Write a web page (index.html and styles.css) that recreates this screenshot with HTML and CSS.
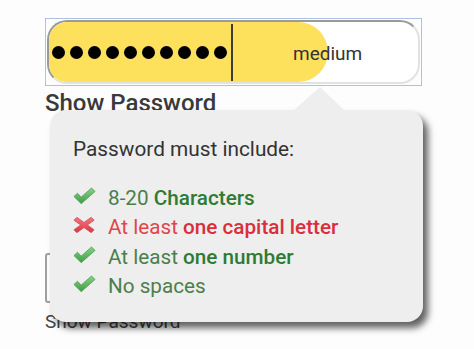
FILE: index.html
```html
<!DOCTYPE html>
<html>
<head>
<meta charset="utf-8">
<link rel="stylesheet" href="styles.css">
</head>
<body>
<div class="page">
  <div class="focus">
    <div class="field">
      <div class="meter"></div>
      <div class="content">
        <div class="dots">
          <span class="dot"></span><span class="dot"></span><span class="dot"></span><span class="dot"></span><span class="dot"></span>
          <span class="dot"></span><span class="dot"></span><span class="dot"></span><span class="dot"></span><span class="dot"></span>
        </div>
        <span class="cursor"></span>
        <span class="strength">medium</span>
      </div>
    </div>
  </div>
  <div class="label big">Show Password</div>
  <div class="field2"></div>
  <div class="label small">Show Password</div>

  <div class="popup">
    <div class="arrow"></div>
    <div class="title">Password must include:</div>
    <ul class="rules">
      <li class="ok">
        <svg class="icon" viewBox="0 0 24 18" width="23" height="18"><defs><linearGradient id="g1" x1="0" y1="0" x2="0" y2="1"><stop offset="0" stop-color="#86d486"/><stop offset="1" stop-color="#3f9c46"/></linearGradient></defs><path d="M1 9.6 L4.6 6.2 L8.6 10.1 L19.4 0.6 L23 4.2 L8.6 17 Z" fill="url(#g1)" stroke="#4c9c50" stroke-width="0.8" stroke-linejoin="round"/></svg>
        <span>8-20 <b>Characters</b></span>
      </li>
      <li class="bad">
        <svg class="icon" viewBox="0 0 24 18" width="23" height="18"><defs><linearGradient id="g2" x1="0" y1="0" x2="0" y2="1"><stop offset="0" stop-color="#f27a82"/><stop offset="1" stop-color="#d9363f"/></linearGradient></defs><path d="M4 1 L11.5 6.3 L19 1 L22 4 L15 9 L22 14 L19 17 L11.5 11.7 L4 17 L1 14 L8 9 L1 4 Z" fill="url(#g2)" stroke="#d24450" stroke-width="0.8" stroke-linejoin="round"/></svg>
        <span>At least <b>one capital letter</b></span>
      </li>
      <li class="ok">
        <svg class="icon" viewBox="0 0 24 18" width="23" height="18"><defs><linearGradient id="g3" x1="0" y1="0" x2="0" y2="1"><stop offset="0" stop-color="#86d486"/><stop offset="1" stop-color="#3f9c46"/></linearGradient></defs><path d="M1 9.6 L4.6 6.2 L8.6 10.1 L19.4 0.6 L23 4.2 L8.6 17 Z" fill="url(#g3)" stroke="#4c9c50" stroke-width="0.8" stroke-linejoin="round"/></svg>
        <span>At least <b>one number</b></span>
      </li>
      <li class="ok">
        <svg class="icon" viewBox="0 0 24 18" width="23" height="18"><defs><linearGradient id="g4" x1="0" y1="0" x2="0" y2="1"><stop offset="0" stop-color="#86d486"/><stop offset="1" stop-color="#3f9c46"/></linearGradient></defs><path d="M1 9.6 L4.6 6.2 L8.6 10.1 L19.4 0.6 L23 4.2 L8.6 17 Z" fill="url(#g4)" stroke="#4c9c50" stroke-width="0.8" stroke-linejoin="round"/></svg>
        <span>No spaces</span>
      </li>
    </ul>
  </div>
</div>
</body>
</html>
```

FILE: styles.css
```css
html, body {
  margin: 0;
  padding: 0;
  background: #fdfdfd;
}
body {
  font-family: Roboto, "Liberation Sans", sans-serif;
  width: 474px;
  height: 349px;
  overflow: hidden;
}
.page {
  position: relative;
  padding: 18px 0 0 45px;
}
.focus {
  width: 373px;
  height: 64px;
  padding: 1px;
  border: 1px solid #a9c2e6;
}
.field {
  box-sizing: border-box;
  height: 64px;
  border: 2px solid;
  border-color: #9a9a9a #e2e2e2 #e2e2e2 #9a9a9a;
  border-radius: 20px;
  background: #fff;
  display: grid;
  overflow: hidden;
}
.meter {
  grid-area: 1 / 1;
  width: 279px;
  background: #fde15d;
  border-radius: 18px 32px 32px 18px;
}
.content {
  grid-area: 1 / 1;
  display: flex;
  align-items: center;
  padding-left: 3px;
}
.dots {
  display: flex;
  gap: 5px;
}
.dot {
  width: 13px;
  height: 13px;
  border-radius: 50%;
  background: #000;
}
.cursor {
  width: 2px;
  height: 57px;
  background: #3d3a30;
  margin-left: 4px;
}
.strength {
  margin-left: 60px;
  font-size: 19px;
  color: #333;
  margin-top: 2px;
}
.label {
  color: #3a3a3a;
}
.big {
  margin-top: 4px;
  font-size: 24px;
  line-height: 26px;
  font-weight: 500;
}
.field2 {
  margin-top: 137px;
  width: 373px;
  height: 50px;
  box-sizing: border-box;
  border: 2px solid #a0a0a0;
  border-radius: 3px;
}
.small {
  margin-top: 8px;
  font-size: 19px;
  line-height: 22px;
  color: #444;
}
.popup {
  position: absolute;
  left: 50px;
  top: 110px;
  width: 373px;
  height: 212px;
  box-sizing: border-box;
  padding: 28px 0 0 23px;
  background: #eeeeee;
  border-radius: 16px;
  box-shadow: 5px 6px 7px rgba(0, 0, 0, 0.62);
}
.arrow {
  position: absolute;
  left: 244px;
  top: -23px;
  width: 50px;
  height: 23px;
  background: #eeeeee;
  clip-path: polygon(52% 0, 100% 100%, 0 100%);
}
.title {
  font-size: 20.8px;
  line-height: 22px;
  color: #333;
}
.rules {
  list-style: none;
  margin: 24px 0 0 0;
  padding: 0;
}
.rules li {
  display: flex;
  align-items: center;
  gap: 12px;
  height: 29.3px;
  font-size: 20.7px;
  line-height: 29.3px;
}
.icon {
  flex: none;
  margin-bottom: 5px;
}
.ok {
  color: #4a7f4a;
}
.ok b {
  color: #2f7b34;
  font-weight: 500;
}
.bad {
  color: #e2434f;
}
.bad b {
  color: #d92f3d;
  font-weight: 500;
}
```
